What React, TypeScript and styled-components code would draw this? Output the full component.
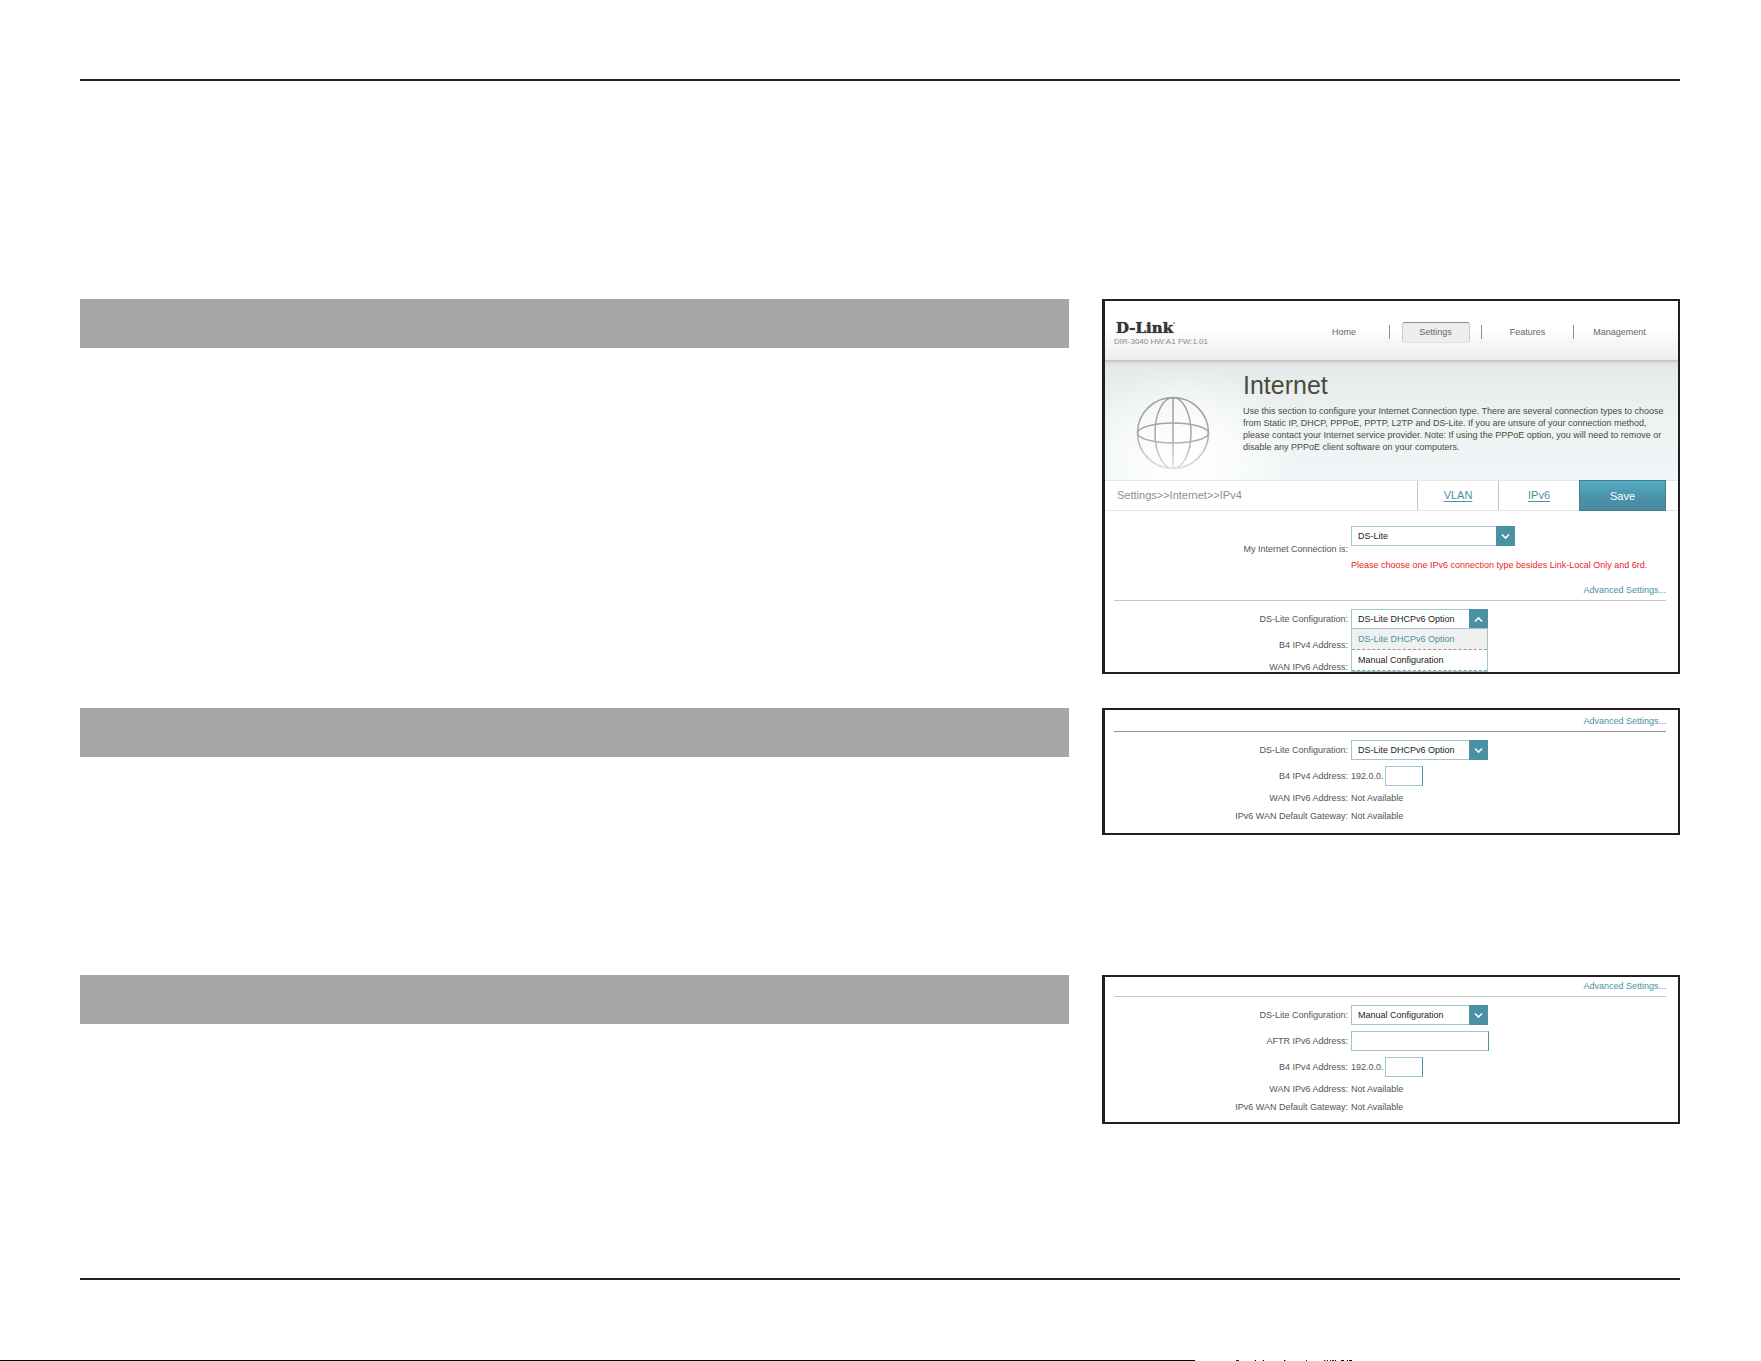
import React from "react";
import styled, { createGlobalStyle, css } from "styled-components";

const teal = "#4b91a3";
const edge = "#9fc6cf";
const ink = "#231f20";

const GlobalStyle = createGlobalStyle`
  *, *::before, *::after { box-sizing: border-box; }
  body { margin: 0; background: #fff; }
  body, button, input, select {
    font-family: "Liberation Sans", Arial, Helvetica, sans-serif;
  }
`;

const Page = styled.div`
  display: flex;
  flex-direction: column;
  min-height: 100vh;
`;

const Sheet = styled.main`
  flex: 1;
  display: flex;
  flex-direction: column;
  padding: 79px 81px 80px 80px;
`;

const Rule = styled.div`
  height: 2px;
  background: ${ink};
`;

const Sections = styled.div`
  flex: 1;
  padding-top: 218px;
`;

const Section = styled.section<{ $after?: number }>`
  display: grid;
  grid-template-columns: minmax(0, 1fr) 578px;
  column-gap: 33px;
  align-items: start;
  margin-bottom: ${(p) => p.$after ?? 0}px;
`;

const Bar = styled.div`
  height: 49px;
  background: #a6a6a5;
`;

const Panel = styled.div<{ $height: number }>`
  height: ${(p) => p.$height}px;
  overflow: hidden;
  border: 2px solid ${ink};
  border-left-width: 3px;
  background: #fff;
`;

const Header = styled.header`
  display: flex;
  justify-content: space-between;
  height: 61px;
  padding: 0 12px 0 9px;
  background: linear-gradient(#fff 45%, #ededed);
  border-bottom: 2px solid #c6c8c8;
`;

const Brand = styled.div`
  padding-top: 18px;
  color: #8a8a8a;
  font-size: 8px;
  line-height: 10px;
`;

const Logo = styled.div`
  padding-left: 2px;
  color: #35353a;
  font: bold 15px/18px "DejaVu Serif", serif;
  text-shadow: 0 0 1px #35353a;
  &::after {
    content: "";
    display: inline-block;
    width: 2px;
    height: 2px;
    border-radius: 1px;
    background: #999;
    vertical-align: 9px;
  }
`;

const Menu = styled.nav`
  display: grid;
  grid-template-columns: repeat(4, 92px);
  padding-top: 21px;
`;

const MenuCell = styled.div`
  display: flex;
  justify-content: center;
  height: 21px;
  & + &::before {
    content: "";
    width: 1px;
    height: 14px;
    margin: 3px auto 0 -1px;
    background: #8d8d8d;
  }
  & + &::after {
    content: "";
    width: 1px;
    margin-left: auto;
  }
`;

const MenuLink = styled.a<{ $active?: boolean }>`
  width: 68px;
  color: #666;
  font-size: 9px;
  line-height: 18px;
  text-align: center;
  text-decoration: none;
  border: 1px solid transparent;
  border-radius: 3px;
  ${(p) =>
    p.$active &&
    css`
      background: #efeeec;
      border-color: #8b8b90 #c9c9c9 #e2e2e2;
    `}
`;

const Banner = styled.div`
  display: grid;
  grid-template-columns: 138px 1fr;
  height: 118px;
  color: #4b4b3c;
  background:
    radial-gradient(ellipse 110px 90px at 80px 95px, #fff 0, rgba(255, 255, 255, 0.7) 45%, rgba(255, 255, 255, 0) 100%),
    linear-gradient(#dcdfdf 0, #e7eaeb 6%, #edf2f3 50%, #f0f6f7);
`;

const Globe = styled.svg`
  width: 74px;
  height: 74px;
  margin: 34px 0 0 31px;
`;

const Title = styled.h1`
  margin: 8px 0 5px;
  font-size: 25px;
  font-weight: normal;
  line-height: 30px;
`;

const Intro = styled.p`
  margin: 0;
  font-size: 9px;
  line-height: 12px;
`;

const Toolbar = styled.div`
  display: grid;
  grid-template-columns: 1fr 81px 81px 87px;
  height: 31px;
  padding: 0 12px;
  border: 1px solid #e6e6e6;
  border-width: 1px 0;
  font-size: 11px;
  line-height: 29px;
  color: #8f8f8f;
`;

const Tab = styled.a`
  border-left: 1px solid #c4c4c4;
  color: ${teal};
  text-align: center;
  text-underline-offset: 2px;
`;

const SaveButton = styled.button`
  margin: -1px 0;
  padding: 0;
  border: 1px solid #417f90;
  background: linear-gradient(#56aec3, #4a90a6 60%, #4a8ba1);
  color: #fff;
  font-size: 11px;
`;

const Form = styled.form`
  display: grid;
  grid-template-columns: 243px 1fr;
  column-gap: 3px;
  row-gap: 6px;
  align-items: center;
  font-size: 9px;
  line-height: 12px;
  color: #55554b;
`;

const Label = styled.label`
  grid-column: 1;
  text-align: right;
`;

const Value = styled.div`
  display: flex;
  align-items: center;
  gap: 1px;
`;

const Stack = styled.div`
  padding-top: 15px;
`;

const Warning = styled.p`
  margin: 13px 0 0;
  color: #ec1c24;
`;

const SelectBox = styled.div<{ $wide?: boolean }>`
  position: relative;
  width: ${(p) => (p.$wide ? 164 : 137)}px;
  height: 20px;
`;

const Select = styled.select`
  appearance: none;
  width: 100%;
  height: 20px;
  padding: 0 20px 0 6px;
  border: 1px solid ${edge};
  border-radius: 0;
  background: #fff;
  color: #222;
  font-size: 9px;
`;

const Arrow = styled.svg`
  position: absolute;
  top: 0;
  right: 0;
  width: 19px;
  height: 20px;
  background: ${teal};
  pointer-events: none;
`;

const Options = styled.ul`
  position: absolute;
  z-index: 1;
  top: 19px;
  left: 0;
  right: 0;
  margin: 0;
  padding: 0;
  list-style: none;
  border: 1px solid ${edge};
  background: #fff;
`;

const Option = styled.li<{ $current?: boolean }>`
  padding: 0 6px;
  border-bottom: 1px dashed #999;
  line-height: 20px;
  background: ${(p) => (p.$current ? "#f0f0f0" : "#fff")};
  color: ${(p) => (p.$current ? teal : "#222")};
`;

const TextInput = styled.input<{ $wide?: boolean }>`
  width: ${(p) => (p.$wide ? 138 : 38)}px;
  height: 20px;
  padding: 0 4px;
  border: 1px solid ${edge};
  border-right-color: ${teal};
  border-radius: 0;
  font-size: 9px;
`;

const Advanced = styled.div<{ $top: number; $dark?: boolean }>`
  margin: 0 12px 8px 9px;
  padding: ${(p) => p.$top}px 0 4px;
  border-bottom: 1px solid ${(p) => (p.$dark ? "#8f9294" : "#c6c6c6")};
  font-size: 9px;
  line-height: 12px;
  text-align: right;
`;

const AdvancedLink = styled.a`
  color: ${teal};
  text-decoration: none;
`;

const Strip = styled.div`
  display: flex;
  height: 1px;
`;

const StripLine = styled.div`
  flex: 1;
  background: #000;
`;

const StripMarks = styled.svg`
  flex: none;
  width: 566px;
  height: 1px;
`;

type PickProps = { id: string; options: string[]; wide?: boolean; open?: boolean };

function Pick({ id, options, wide, open }: PickProps) {
  return (
    <SelectBox $wide={wide}>
      <Select id={id} defaultValue={options[0]}>
        {options.map((o) => (
          <option key={o}>{o}</option>
        ))}
      </Select>
      <Arrow viewBox="0 0 19 20" aria-hidden="true">
        <path
          d={open ? "M6 12.5 L9.5 9 L13 12.5" : "M6 8.5 L9.5 12 L13 8.5"}
          fill="none"
          stroke="#fff"
          strokeWidth="1.6"
        />
      </Arrow>
      {open && (
        <Options>
          {options.map((o, i) => (
            <Option key={o} $current={i === 0}>
              {o}
            </Option>
          ))}
        </Options>
      )}
    </SelectBox>
  );
}

const DHCP = "DS-Lite DHCPv6 Option";
const MANUAL = "Manual Configuration";

type DsLiteProps = { name: string; options: string[]; top: number; open?: boolean; dark?: boolean; aftr?: boolean };

function DsLiteForm({ name, options, top, open, dark, aftr }: DsLiteProps) {
  return (
    <>
      <Advanced $top={top} $dark={dark}>
        <AdvancedLink href="#advanced">Advanced Settings...</AdvancedLink>
      </Advanced>
      <Form>
        <Label htmlFor={`${name}-config`}>DS-Lite Configuration:</Label>
        <Pick id={`${name}-config`} options={options} open={open} />
        {aftr && (
          <>
            <Label htmlFor={`${name}-aftr`}>AFTR IPv6 Address:</Label>
            <Value>
              <TextInput id={`${name}-aftr`} $wide />
            </Value>
          </>
        )}
        <Label htmlFor={`${name}-b4`}>B4 IPv4 Address:</Label>
        <Value>
          {!open && "192.0.0."}
          <TextInput id={`${name}-b4`} />
        </Value>
        <Label as="span">WAN IPv6 Address:</Label>
        {!open && (
          <>
            <Value>Not Available</Value>
            <Label as="span">IPv6 WAN Default Gateway:</Label>
            <Value>Not Available</Value>
          </>
        )}
      </Form>
    </>
  );
}

const marks: [number, number, string][] = [
  [41, 3, "#036"], [59, 1, "#ff0"], [60, 1, "#000"], [67, 1, "#ff0"], [68, 1, "#000"],
  [89, 1, "#000"], [90, 1, "#0cf"], [110, 1, "#ff0"], [111, 1, "#00f"], [129, 1, "#e00"],
  [130, 1, "#0cf"], [132, 1, "#000"], [135, 1, "#00f"], [137, 2, "#033"], [140, 1, "#000"],
  [146, 3, "#300"], [151, 1, "#ff0"], [152, 1, "#000"], [154, 3, "#300"],
];

export default function App() {
  return (
    <Page>
      <GlobalStyle />
      <Sheet>
        <Rule />
        <Sections>
          <Section $after={34}>
            <Bar />
            <Panel $height={375}>
              <Header>
                <Brand>
                  <Logo>D-Link</Logo>
                  DIR-3040 HW:A1 FW:1.01
                </Brand>
                <Menu>
                  {["Home", "Settings", "Features", "Management"].map((m) => (
                    <MenuCell key={m}>
                      <MenuLink href={`#${m.toLowerCase()}`} $active={m === "Settings"}>
                        {m}
                      </MenuLink>
                    </MenuCell>
                  ))}
                </Menu>
              </Header>
              <Banner>
                <Globe viewBox="0 0 74 74" fill="none" strokeWidth="1.5" aria-hidden="true">
                  <defs>
                    <linearGradient id="fade" gradientUnits="userSpaceOnUse" x1="0" y1="0" x2="0" y2="74">
                      <stop offset="0" stopColor="#9c9c9c" />
                      <stop offset="0.55" stopColor="#a9a9a9" />
                      <stop offset="1" stopColor="#e2e2e2" />
                    </linearGradient>
                  </defs>
                  <g stroke="url(#fade)">
                    <circle cx="37" cy="37" r="35.5" />
                    <ellipse cx="37" cy="37" rx="18" ry="35.5" />
                    <path d="M37 1.5 L37.01 72.5" />
                    <ellipse cx="37" cy="37" rx="35.5" ry="10" />
                  </g>
                </Globe>
                <div>
                  <Title>Internet</Title>
                  <Intro>
                    Use this section to configure your Internet Connection type. There are several connection types to choose
                    <br />
                    from Static IP, DHCP, PPPoE, PPTP, L2TP and DS-Lite. If you are unsure of your connection method,
                    <br />
                    please contact your Internet service provider. Note: If using the PPPoE option, you will need to remove or
                    <br />
                    disable any PPPoE client software on your computers.
                  </Intro>
                </div>
              </Banner>
              <Toolbar>
                <span>Settings&gt;&gt;Internet&gt;&gt;IPv4</span>
                <Tab href="#vlan">VLAN</Tab>
                <Tab href="#ipv6">IPv6</Tab>
                <SaveButton type="button">Save</SaveButton>
              </Toolbar>
              <Stack>
                <Form>
                  <Label htmlFor="connection">My Internet Connection is:</Label>
                  <div>
                    <Pick id="connection" options={["DS-Lite"]} wide />
                    <Warning>Please choose one IPv6 connection type besides Link-Local Only and 6rd.</Warning>
                  </div>
                </Form>
              </Stack>
              <DsLiteForm name="open" options={[DHCP, MANUAL]} top={13} open />
            </Panel>
          </Section>
          <Section $after={140}>
            <Bar />
            <Panel $height={127}>
              <DsLiteForm name="dhcp" options={[DHCP, MANUAL]} top={5} dark />
            </Panel>
          </Section>
          <Section>
            <Bar />
            <Panel $height={149}>
              <DsLiteForm name="manual" options={[MANUAL, DHCP]} top={3} aftr />
            </Panel>
          </Section>
        </Sections>
        <Rule />
      </Sheet>
      <Strip>
        <StripLine />
        <StripMarks viewBox="0 0 566 1" aria-hidden="true">
          {marks.map(([x, w, fill]) => (
            <rect key={x} x={x} width={w} height="1" fill={fill} />
          ))}
        </StripMarks>
      </Strip>
    </Page>
  );
}
